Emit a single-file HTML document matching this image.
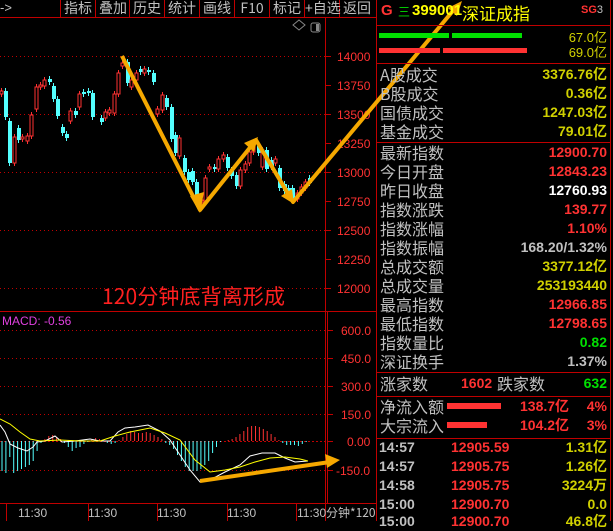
<!DOCTYPE html><html><head><meta charset="utf-8"><style>
body{margin:0;width:613px;height:521px;background:#000;overflow:hidden;position:relative;font-family:"Liberation Sans","Noto Sans CJK SC",sans-serif}
.a{position:absolute;white-space:nowrap}
.l{color:#c0c0c0;font-size:16px;left:380px;font-family:"WenQuanYi Zen Hei","Noto Sans CJK SC",sans-serif;line-height:19px}
.v{right:6px;font-weight:bold;font-size:14px;line-height:19px}
.r{color:#ff3232}.y{color:#d0d000}.w{color:#fff}.g{color:#c0c0c0}.gr{color:#00e000}
.btn{top:0;height:17px;color:#c0c0c0;font-size:14px;line-height:17px;text-align:center;width:34px;font-family:"WenQuanYi Zen Hei","Noto Sans CJK SC",sans-serif}
.hl{position:absolute;height:1px;background:#c00000}
</style></head><body>
<svg class="a" style="left:0;top:0" width="613" height="521">
<g stroke="#c00000" fill="none">
<line x1="0" y1="17.5" x2="376" y2="17.5"/>
<line x1="60.5" y1="0" x2="60.5" y2="17"/><line x1="95.5" y1="0" x2="95.5" y2="17"/><line x1="129.5" y1="0" x2="129.5" y2="17"/><line x1="164.5" y1="0" x2="164.5" y2="17"/><line x1="199.5" y1="0" x2="199.5" y2="17"/><line x1="234.5" y1="0" x2="234.5" y2="17"/><line x1="269.5" y1="0" x2="269.5" y2="17"/><line x1="304.5" y1="0" x2="304.5" y2="17"/><line x1="339.5" y1="0" x2="339.5" y2="17"/>
<line x1="325.5" y1="17" x2="325.5" y2="521"/>
<line x1="0" y1="311.5" x2="376" y2="311.5"/>
<line x1="327.5" y1="312" x2="327.5" y2="503"/>
<line x1="0" y1="503.5" x2="376" y2="503.5"/>
<line x1="376.5" y1="0" x2="376.5" y2="521"/>
<line x1="610.5" y1="0" x2="610.5" y2="521"/>
<line x1="6.5" y1="503" x2="6.5" y2="521"/><line x1="88.5" y1="503" x2="88.5" y2="521"/><line x1="157.5" y1="503" x2="157.5" y2="521"/><line x1="227.5" y1="503" x2="227.5" y2="521"/><line x1="296.5" y1="503" x2="296.5" y2="521"/>
</g>
<g stroke="#c00000" stroke-dasharray="1,3">
<line x1="0" y1="56.5" x2="325" y2="56.5"/><line x1="0" y1="114.5" x2="325" y2="114.5"/><line x1="0" y1="172.5" x2="325" y2="172.5"/><line x1="0" y1="230.5" x2="325" y2="230.5"/><line x1="0" y1="288.5" x2="325" y2="288.5"/>
<line x1="0" y1="330.5" x2="325" y2="330.5"/><line x1="0" y1="358.5" x2="325" y2="358.5"/><line x1="0" y1="386.5" x2="325" y2="386.5"/><line x1="0" y1="414.5" x2="325" y2="414.5"/><line x1="0" y1="470.5" x2="325" y2="470.5"/>
</g>
<line x1="0" y1="441.5" x2="325" y2="441.5" stroke="#c00000" stroke-dasharray="2,2"/>
<g stroke="#c00000"><line x1="326" y1="56.5" x2="331" y2="56.5"/><line x1="326" y1="85.5" x2="331" y2="85.5"/><line x1="326" y1="114.5" x2="331" y2="114.5"/><line x1="326" y1="143.5" x2="331" y2="143.5"/><line x1="326" y1="172.5" x2="331" y2="172.5"/><line x1="326" y1="201.5" x2="331" y2="201.5"/><line x1="326" y1="230.5" x2="331" y2="230.5"/><line x1="326" y1="259.5" x2="331" y2="259.5"/><line x1="326" y1="288.5" x2="331" y2="288.5"/>
<line x1="328" y1="330.5" x2="333" y2="330.5"/><line x1="328" y1="358.5" x2="333" y2="358.5"/><line x1="328" y1="386.5" x2="333" y2="386.5"/><line x1="328" y1="414.5" x2="333" y2="414.5"/><line x1="328" y1="441.5" x2="333" y2="441.5"/><line x1="328" y1="470.5" x2="333" y2="470.5"/></g>
<g fill="#ff3232" font-size="12" font-family="Liberation Sans">
<text x="337" y="61">14000</text><text x="337" y="90">13750</text><text x="337" y="119">13500</text><text x="337" y="148">13250</text><text x="337" y="177">13000</text><text x="337" y="206">12750</text><text x="337" y="235">12500</text><text x="337" y="264">12250</text><text x="337" y="293">12000</text>
<text x="341" y="335">600.0</text><text x="341" y="363">450.0</text><text x="341" y="391">300.0</text><text x="341" y="419">150.0</text><text x="347" y="446">0.00</text><text x="336" y="475">-150.0</text>
</g>
<g fill="#c0c0c0" font-size="12" font-family="Liberation Sans"><text x="18" y="517">11:30</text><text x="88" y="517">11:30</text><text x="157" y="517">11:30</text><text x="227" y="517">11:30</text><text x="297" y="517">11:30</text></g>
<text x="326" y="517" fill="#c0c0c0" font-size="12" font-family="Noto Sans CJK SC,sans-serif">分钟*120</text>
<text x="2" y="325" fill="#e040e0" font-size="12" font-family="Liberation Sans">MACD: -0.56</text>
<text x="102" y="304" fill="#ff2020" font-size="21" font-family="Noto Sans CJK SC,sans-serif" textLength="183">120分钟底背离形成</text>
<path d="M293 25 l6 -5 6 5 -6 5z" stroke="#888" fill="none"/>
<rect x="311" y="23" width="9" height="9" rx="2" stroke="#888" fill="none"/><rect x="316" y="24" width="3" height="7" fill="#888"/>
<g id="c" stroke-width="1"></g>
<polyline fill="none" stroke="#fff" points="0,425 5,432 10,444 18,448 27,451 33,447 37,442 45,441 55,436 62,442 75,441 90,439 100,441 110,441 118,432 125,428 135,427 148,425 160,431 170,440 180,455 190,470 200,482 210,480 225,472 240,465 250,456 262,453 275,453 285,458 295,462 308,461"/>
<polyline fill="none" stroke="#ffff00" points="0,419 10,424 20,432 30,439 40,441 60,440 80,441 100,441 115,436 130,432 150,428 165,433 180,440 195,460 210,472 225,470 240,467 255,462 270,458 285,457 300,459 308,461"/>
<g fill="none" stroke="#f5a800" stroke-width="4" stroke-linejoin="round">
<path d="M122 56 L200 210 L256 140 L293 202 L457 6"/>
<path d="M200 481 L330 462"/>
</g>
<g fill="#f5a800">
<path d="M200 213 L190 196 L204 192z"/><path d="M258 137 L254 152 L244 143z"/><path d="M294 204 L281 196 L292 189z"/><path d="M462 1 L457 16 L448 8z"/><path d="M340 460 L325 454 L327 468z"/>
</g>
</svg>
<div class="a btn" style="left:61px">指标</div><div class="a btn" style="left:96px">叠加</div><div class="a btn" style="left:130px">历史</div><div class="a btn" style="left:165px">统计</div><div class="a btn" style="left:200px">画线</div><div class="a btn" style="left:235px">F10</div><div class="a btn" style="left:270px">标记</div><div class="a btn" style="left:305px">+自选</div><div class="a btn" style="left:340px">返回</div>
<div class="a" style="left:0;top:0;color:#c0c0c0;font-size:13px">-&gt;</div>
<div class="a" style="left:381px;top:2px;color:#ff3232;font-size:15px;font-weight:bold">G</div>
<div class="a" style="left:398px;top:3px;color:#00e000;font-size:12px">三</div>
<div class="a" style="left:412px;top:2px;color:#ffff00;font-size:15px;font-weight:bold">399001</div>
<div class="a" style="left:462px;top:0px;color:#ffff00;font-size:17px;font-family:'Noto Sans CJK SC',sans-serif">深证成指</div>
<div class="a" style="left:581px;top:4px;color:#ff3232;font-size:11px;font-weight:bold">SG<span style="color:#c0c0c0;font-weight:normal">3</span></div>
<div class="hl" style="left:377px;top:25px;width:234px"></div>
<div class="a" style="left:379px;top:33px;width:70px;height:5px;background:#00e000"></div><div class="a" style="left:452px;top:33px;width:70px;height:5px;background:#00e000"></div>
<div class="a" style="left:379px;top:48px;width:61px;height:5px;background:#ff3232"></div><div class="a" style="left:443px;top:48px;width:84px;height:5px;background:#ff3232"></div>
<div class="a y" style="right:6px;top:27px;font-size:13px">67.0亿</div><div class="a y" style="right:6px;top:42px;font-size:13px">69.0亿</div>
<div class="hl" style="left:377px;top:63px;width:234px"></div>
<div class="a l" style="top:65px">A股成交</div><div class="a v y" style="top:65px">3376.76亿</div>
<div class="a l" style="top:84px">B股成交</div><div class="a v y" style="top:84px">0.36亿</div>
<div class="a l" style="top:103px">国债成交</div><div class="a v y" style="top:103px">1247.03亿</div>
<div class="a l" style="top:122px">基金成交</div><div class="a v y" style="top:122px">79.01亿</div>
<div class="hl" style="left:377px;top:142px;width:234px"></div>
<div class="a l" style="top:143px">最新指数</div><div class="a v r" style="top:143px">12900.70</div>
<div class="a l" style="top:162px">今日开盘</div><div class="a v r" style="top:162px">12843.23</div>
<div class="a l" style="top:181px">昨日收盘</div><div class="a v w" style="top:181px">12760.93</div>
<div class="a l" style="top:200px">指数涨跌</div><div class="a v r" style="top:200px">139.77</div>
<div class="a l" style="top:219px">指数涨幅</div><div class="a v r" style="top:219px">1.10%</div>
<div class="a l" style="top:238px">指数振幅</div><div class="a v g" style="top:238px">168.20/1.32%</div>
<div class="a l" style="top:257px">总成交额</div><div class="a v y" style="top:257px">3377.12亿</div>
<div class="a l" style="top:276px">总成交量</div><div class="a v y" style="top:276px">253193440</div>
<div class="a l" style="top:295px">最高指数</div><div class="a v r" style="top:295px">12966.85</div>
<div class="a l" style="top:314px">最低指数</div><div class="a v r" style="top:314px">12798.65</div>
<div class="a l" style="top:333px">指数量比</div><div class="a v gr" style="top:333px">0.82</div>
<div class="a l" style="top:352px">深证换手</div><div class="a v g" style="top:352px">1.37%</div>
<div class="hl" style="left:377px;top:372px;width:234px"></div>
<div class="a l" style="top:374px">涨家数</div><div class="a v r" style="top:374px;right:auto;left:461px">1602</div><div class="a l" style="top:374px;left:497px">跌家数</div><div class="a v gr" style="top:374px">632</div>
<div class="hl" style="left:377px;top:396px;width:234px"></div>
<div class="a l" style="top:397px">净流入额</div><div class="a" style="left:447px;top:403px;width:54px;height:6px;background:#ff3232"></div><div class="a v r" style="top:397px;right:auto;left:520px">138.7亿</div><div class="a v r" style="top:397px">4%</div>
<div class="a l" style="top:416px">大宗流入</div><div class="a" style="left:447px;top:422px;width:40px;height:6px;background:#ff3232"></div><div class="a v r" style="top:416px;right:auto;left:520px">104.2亿</div><div class="a v r" style="top:416px">3%</div>
<div class="hl" style="left:377px;top:438px;width:234px"></div>
<div class="a v g" style="top:438px;left:379px;right:auto">14:57</div><div class="a v r" style="top:438px;left:451px;right:auto">12905.59</div><div class="a v y" style="top:438px">1.31亿</div>
<div class="a v g" style="top:457px;left:379px;right:auto">14:57</div><div class="a v r" style="top:457px;left:451px;right:auto">12905.75</div><div class="a v y" style="top:457px">1.26亿</div>
<div class="a v g" style="top:476px;left:379px;right:auto">14:58</div><div class="a v r" style="top:476px;left:451px;right:auto">12905.75</div><div class="a v y" style="top:476px">3224万</div>
<div class="a v g" style="top:495px;left:379px;right:auto">15:00</div><div class="a v r" style="top:495px;left:451px;right:auto">12900.70</div><div class="a v y" style="top:495px">0.0</div>
<div class="a v g" style="top:512px;left:379px;right:auto">15:00</div><div class="a v r" style="top:512px;left:451px;right:auto">12900.70</div><div class="a v y" style="top:512px">46.8亿</div>
<script>
var C=[[1,91,94,1],[5,91,117,0],[9,121,163,0],[14,137,163,1],[18,128,140,0],[22,137,139,1],[27,136,141,1],[31,115,136,1],[36,87,109,1],[40,85,87,1],[44,80,86,1],[49,79,82,0],[53,86,99,0],[57,99,116,0],[62,127,133,0],[66,134,138,0],[70,111,121,1],[75,111,115,0],[79,94,107,1],[83,92,94,0],[88,91,93,0],[92,93,117,0],[101,118,122,0],[105,112,118,1],[109,110,113,1],[114,94,113,1],[118,73,94,1],[122,63,66,1],[127,62,83,0],[131,80,87,1],[136,73,80,1],[140,69,72,0],[144,69,73,1],[148,70,72,0],[153,73,82,0],[157,109,114,1],[162,95,110,1],[166,98,107,0],[171,107,139,0],[175,135,153,0],[179,138,156,1],[184,158,172,0],[188,172,180,0],[192,171,182,0],[196,182,197,0],[201,200,203,1],[205,178,201,1],[209,167,169,1],[214,167,169,0],[218,159,169,1],[223,155,159,1],[227,157,168,0],[231,170,176,0],[236,175,186,0],[240,170,186,1],[245,164,170,1],[249,152,163,1],[253,142,152,1],[258,146,153,0],[262,150,167,1],[266,150,169,0],[271,160,167,0],[275,159,163,1],[279,168,188,0],[284,184,191,0],[288,188,193,0],[292,188,199,0],[297,193,199,1],[301,187,193,1],[305,182,188,1],[309,178,183,0]];
var H=[-30,-32,-16,-32,-30,-28,-26,-24,-20,-10,-2,2,5,6,4,2,-2,-6,-10,-7,-6,-3,-1,2,3,2,0,-2,-3,-2,1,4,7,10,9,8,8,9,8,6,4,2,-2,-4,-8,-14,-20,-26,-30,-30,-30,-28,-24,-20,-12,-6,-1,0,1,2,4,7,10,14,15,15,14,12,10,7,4,1,-2,-4,-4,-4,-5,-3,-1];
var s='';C.forEach(function(c){var col=c[3]?'#ff3232':'#54ffff';s+='<line x1="'+(c[0]+.5)+'" y1="'+(c[1]-3)+'" x2="'+(c[0]+.5)+'" y2="'+(c[2]+3)+'" stroke="'+col+'"/>';s+=c[3]?'<rect x="'+(c[0]-1)+'" y="'+c[1]+'" width="3" height="'+Math.max(1,c[2]-c[1])+'" fill="#000" stroke="'+col+'"/>':'<rect x="'+(c[0]-1)+'" y="'+c[1]+'" width="4" height="'+Math.max(1,c[2]-c[1])+'" fill="'+col+'"/>';});
H.forEach(function(h,i){var x=2+i*3.9;s+='<line x1="'+x+'" y1="441" x2="'+x+'" y2="'+(441-h)+'" stroke="'+(h>0?'#ff3232':'#54ffff')+'"/>';});
document.getElementById('c').innerHTML=s;
</script>
</body></html>
